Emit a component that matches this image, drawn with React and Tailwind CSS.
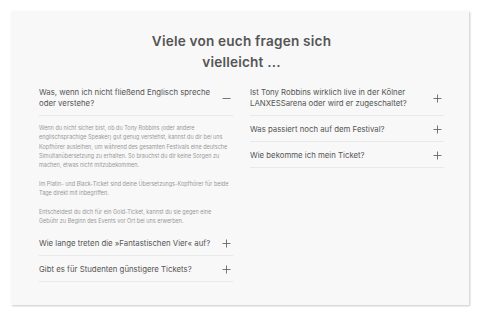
import React from "react";

const Plus = () => (
  <svg width="9" height="9" viewBox="0 0 9 9" className="shrink-0">
    <path d="M4.5 0.5V8.5M0.5 4.5H8.5" stroke="#666" strokeWidth="0.9" />
  </svg>
);
const Minus = () => (
  <svg width="9" height="9" viewBox="0 0 9 9" className="shrink-0">
    <path d="M0.5 4.5H8.5" stroke="#666" strokeWidth="0.9" />
  </svg>
);

function Q({ children, open }) {
  return (
    <div className="flex items-center justify-between border-b border-[#e9e9e9] pt-[8px] pb-[6px]">
      <div className="text-[7.8px] leading-[11px] text-[#555] whitespace-nowrap">{children}</div>
      <div className="mr-[2px]">{open ? <Minus /> : <Plus />}</div>
    </div>
  );
}

export default function App() {
  return (
    <div className="w-[480px] h-[316px] bg-white pt-[11px] pl-[11px]" style={{ fontFamily: "Inter, 'Noto Sans', sans-serif" }}>
      <div className="w-[458px] h-[294px] bg-[#f8f8f8] shadow-[1px_1px_2px_rgba(0,0,0,0.22)] pl-[28px] pr-[25px] pt-[20px]">
        <h2 className="text-center text-[13.6px] leading-[21px] font-semibold text-[#555] tracking-[0.2px]">
          Viele von euch fragen sich
          <br />
          vielleicht ...
        </h2>
        <div className="mt-[6px] grid grid-cols-[194px_194px] gap-x-[17px]">
          <div>
            <Q open>
              Was, wenn ich nicht fließend Englisch spreche
              <br />
              oder verstehe?
            </Q>
            <div className="pt-[8px] pb-[3px] text-[5.5px] leading-[9.3px] text-[#999] whitespace-nowrap">
              <p>
                Wenn du nicht sicher bist, ob du Tony Robbins (oder andere
                <br />
                englischsprachige Speaker) gut genug verstehst, kannst du dir bei uns
                <br />
                Kopfhörer ausleihen, um während des gesamten Festivals eine deutsche
                <br />
                Simultanübersetzung zu erhalten. So brauchst du dir keine Sorgen zu
                <br />
                machen, etwas nicht mitzubekommen.
              </p>
              <p className="mt-[9.5px]">
                Im Platin- und Black-Ticket sind deine Übersetzungs-Kopfhörer für beide
                <br />
                Tage direkt mit inbegriffen.
              </p>
              <p className="mt-[9.5px]">
                Entscheidest du dich für ein Gold-Ticket, kannst du sie gegen eine
                <br />
                Gebühr zu Beginn des Events vor Ort bei uns erwerben.
              </p>
            </div>
            <Q>Wie lange treten die »Fantastischen Vier« auf?</Q>
            <Q>Gibt es für Studenten günstigere Tickets?</Q>
          </div>
          <div>
            <Q>
              Ist Tony Robbins wirklich live in der Kölner
              <br />
              LANXESSarena oder wird er zugeschaltet?
            </Q>
            <Q>Was passiert noch auf dem Festival?</Q>
            <Q>Wie bekomme ich mein Ticket?</Q>
          </div>
        </div>
      </div>
    </div>
  );
}
